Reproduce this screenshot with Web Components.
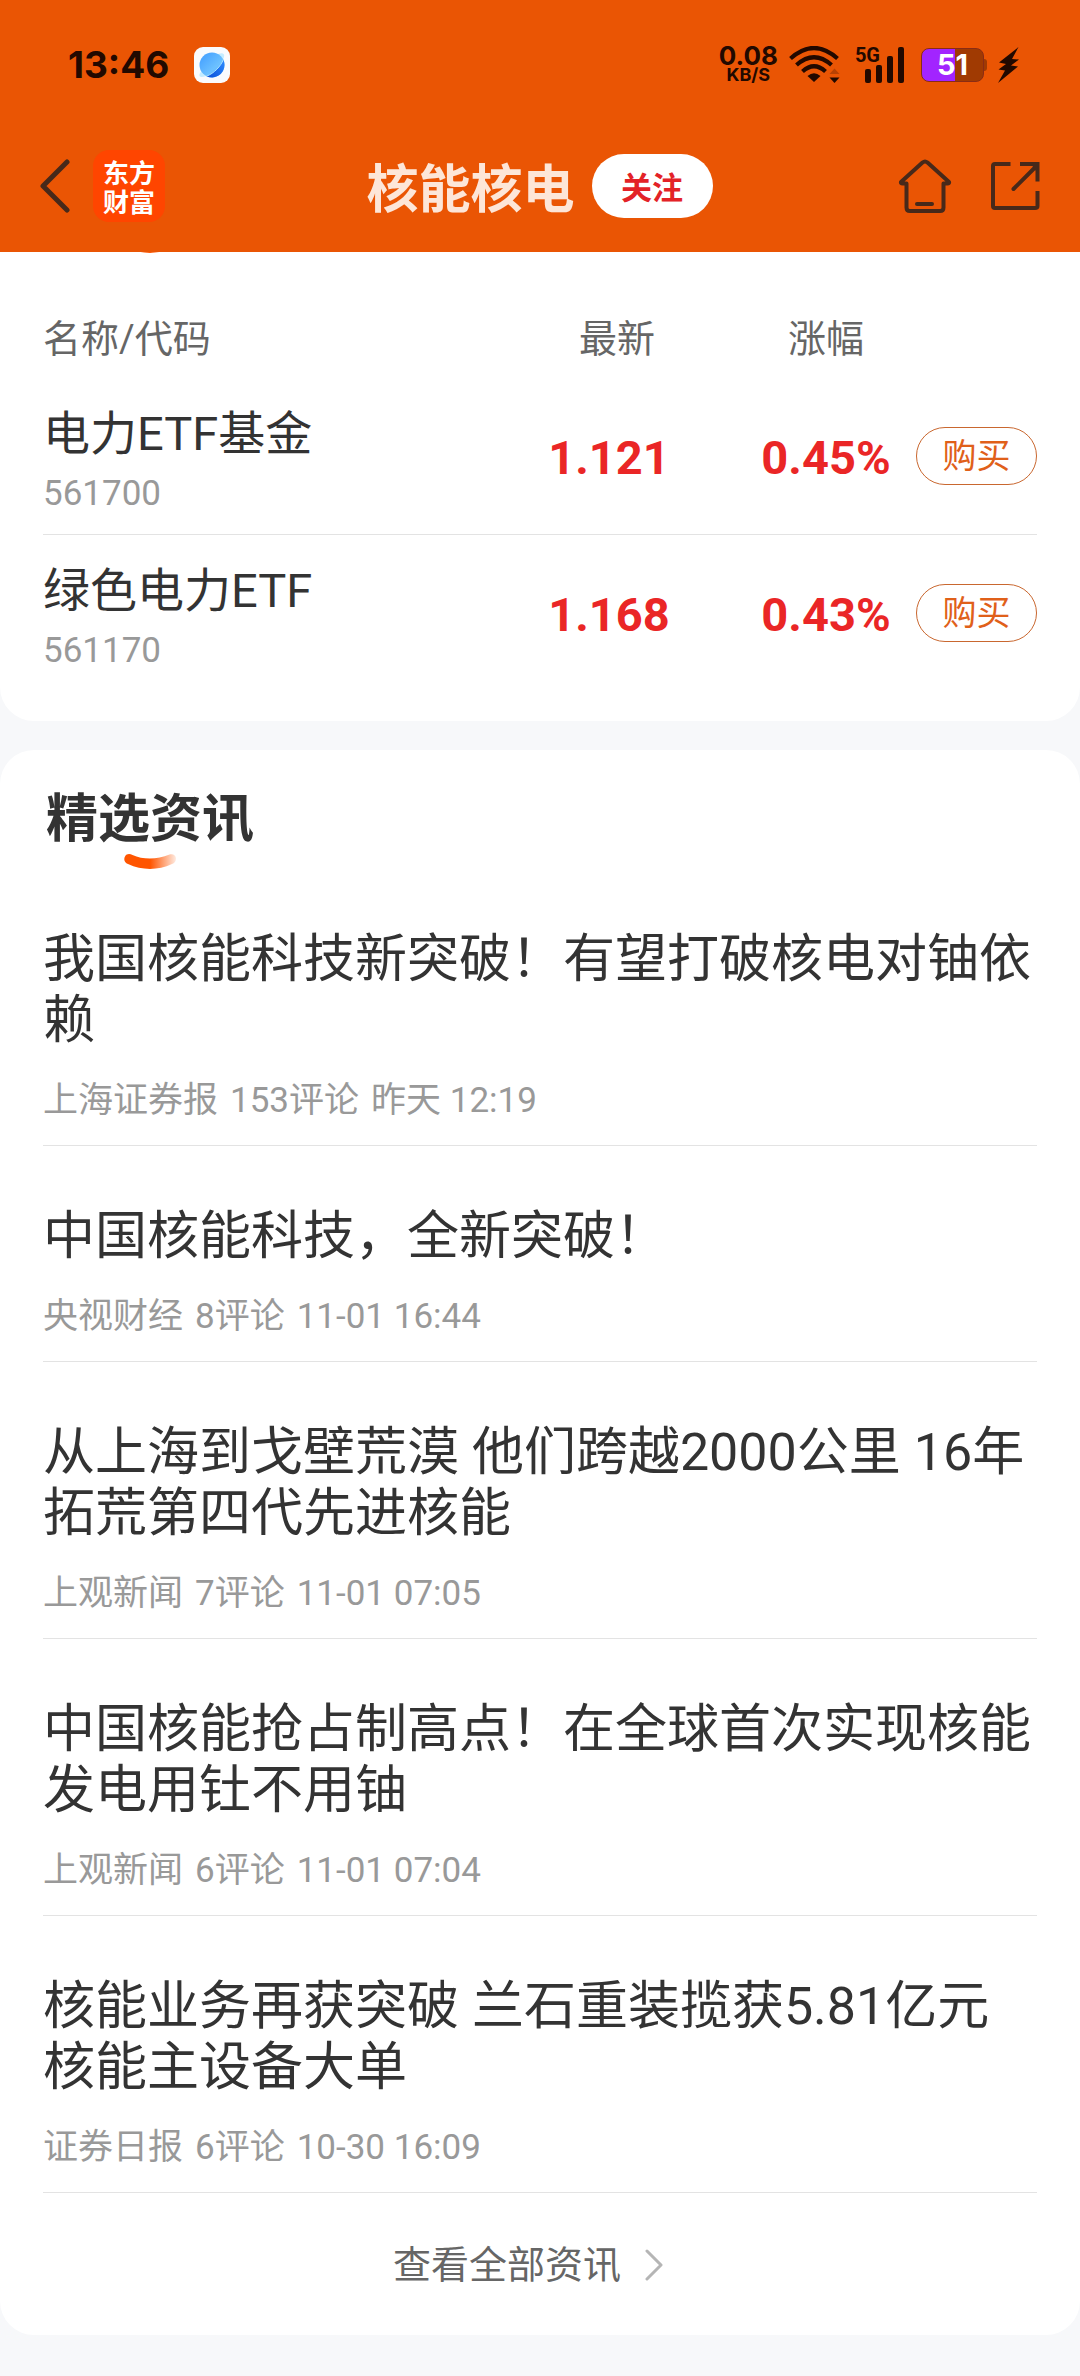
<!DOCTYPE html>
<html lang="zh-CN">
<head>
<meta charset="utf-8">
<meta name="viewport" content="width=device-width, initial-scale=1">
<title>核能核电</title>
<style>
  :root {
    --brand: #ea5504;
    --ink: #333;
    --muted: #666;
    --faint: #999;
    --line: #e3e3e3;
    --rise: #ea2626;
    --side: 43px;
  }
  body {
    margin: 0;
    background: #f7f8fa;
    color: var(--ink);
    font-family: Roboto, "Noto Sans CJK SC", sans-serif;
  }
</style>
</head>
<body>
<app-header>
  <status-bar></status-bar>
  <nav-bar>核能核电</nav-bar>
</app-header>
<main>
  <page-card flush>
    <fund-table></fund-table>
  </page-card>
  <page-card>
    <section-title>精选资讯</section-title>
    <news-item href="#n1">我国核能科技新突破！有望打破核电对铀依赖<span slot="source">上海证券报</span><span slot="comments">153评论</span><time slot="time">昨天 12:19</time></news-item>
    <news-item href="#n2">中国核能科技，全新突破！<span slot="source">央视财经</span><span slot="comments">8评论</span><time slot="time">11-01 16:44</time></news-item>
    <news-item href="#n3">从上海到戈壁荒漠 他们跨越2000公里 16年拓荒第四代先进核能<span slot="source">上观新闻</span><span slot="comments">7评论</span><time slot="time">11-01 07:05</time></news-item>
    <news-item href="#n4">中国核能抢占制高点！在全球首次实现核能发电用钍不用铀<span slot="source">上观新闻</span><span slot="comments">6评论</span><time slot="time">11-01 07:04</time></news-item>
    <news-item href="#n5">核能业务再获突破 兰石重装揽获5.81亿元核能主设备大单<span slot="source">证券日报</span><span slot="comments">6评论</span><time slot="time">10-30 16:09</time></news-item>
    <more-link href="#all">查看全部资讯</more-link>
  </page-card>
</main>

<script>
const define = (name, html, setup) => {
  const template = document.createElement('template');
  template.innerHTML = html;
  customElements.define(name, class extends HTMLElement {
    constructor() {
      super();
      this.attachShadow({ mode: 'open' }).append(template.content.cloneNode(true));
    }
    connectedCallback() {
      if (setup) setup(this, this.shadowRoot);
    }
  });
};

/* Short curved stroke that fades out to the right, used below section titles */
define('smile-mark', `
  <style>
    :host { display: block; width: 52px; height: 15px; }
    svg { display: block; width: 100%; height: 100%; }
  </style>
  <svg viewBox="0 0 52 15" aria-hidden="true">
    <defs><linearGradient id="g" x1="0" x2="1" y1="0" y2="0">
      <stop offset=".5" stop-color="#ff5500"/><stop offset="1" stop-color="#ff5500" stop-opacity=".12"/>
    </linearGradient></defs>
    <path d="M1 2.5C2.500 -.3 5.500 -.6 8.500 1C19 5.800 33 5.800 45.500 .6C49 -.6 52 1.500 52 4.500C52 7.500 50.500 9 48 10C34 16.500 18 16.500 4 10C.5 8.300 -.6 5.500 1 2.500Z" fill="url(#g)"/>
  </svg>`);

define('app-header', `
  <style>
    :host { display: block; position: relative; z-index: 1; background: var(--brand); }
  </style>
  <slot></slot>`);

define('status-bar', `
  <style>
    :host {
      display: flex; align-items: center; justify-content: space-between;
      box-sizing: border-box; height: 120px; padding: 9px 60px 0 68px;
      color: #220900; font-family: Inter, sans-serif; font-weight: 700;
    }
    div { display: flex; align-items: center; }
    svg { display: block; }
    .left { gap: 25px; }
    .time { font-size: 37px; line-height: 48px; }
    .rate { flex-direction: column; font-size: 26px; line-height: 20px; }
    .rate small { font-size: 18px; line-height: 17px; }
    .wifi { margin-left: 11px; }
    .signal { align-items: flex-start; margin-left: 14px; }
    .signal span { font: 700 20px/18px Roboto, sans-serif; }
    .signal svg { margin-left: -15px; }
    .battery {
      justify-content: center; box-sizing: border-box; width: 63px; height: 34px; margin-left: 17px;
      position: relative; border: 1px solid #8a2c14; border-radius: 8px;
      background: linear-gradient(90deg, #a224ff 54%, #a03a02 54%);
      color: #fff; font-size: 29px; line-height: 32px;
    }
    .battery::after {
      content: ""; position: absolute; right: -4px; top: 10px; width: 3px; height: 12px;
      background: #a03a02; border-radius: 0 3px 3px 0;
    }
    .bolt { margin-left: 14px; }
  </style>
  <div class="left">
    <span class="time">13:46</span>
    <svg width="36" height="36" viewBox="0 0 36 36" aria-hidden="true">
      <defs>
        <linearGradient id="a" x1="0" y1="0" x2="1" y2="1"><stop stop-color="#3f9bff"/><stop offset=".6" stop-color="#6bc0ff"/></linearGradient>
        <linearGradient id="b" x1="0" y1="1" x2="1" y2="0"><stop stop-color="#0a4fd8"/><stop offset="1" stop-color="#2f8cff"/></linearGradient>
      </defs>
      <rect width="36" height="36" rx="9" fill="#fafbfd"/>
      <path d="M6 26C4 30 7 31 12 29C20 26 28 17 30 10C31 6 28 5.500 24 7Z" fill="#c4ecff"/>
      <circle cx="18" cy="18" r="12.500" fill="url(#a)"/>
      <path d="M30.500 18A12.500 12.500 0 0 1 12.500 29.200C20 26.500 27 19 29.300 12.600Q30.500 15 30.500 18Z" fill="url(#b)"/>
      <path d="M12.500 29.200C20 26.500 27 19 29.300 12.600" fill="none" stroke="#a8e2ff"/>
    </svg>
  </div>
  <div>
    <div class="rate"><span>0.08</span><small>KB/S</small></div>
    <svg class="wifi" width="52" height="37" viewBox="0 0 52 37" aria-hidden="true">
      <g fill="none" stroke="currentColor" stroke-width="4.200">
        <path d="M1.500 12.500Q25 -8.500 48.500 12.500"/>
        <path d="M7.500 19Q25 3.500 42.500 19"/>
        <path d="M13.500 25.500Q25 15 36.500 25.500"/>
      </g>
      <path d="M25 36L18.500 30Q25 24.500 31.500 30Z" fill="currentColor"/>
      <path d="M45.500 22.500L50.500 28H40.500Z" fill="#b84103"/>
      <path d="M45.500 37L50.500 31.500H40.500Z" fill="currentColor"/>
    </svg>
    <div class="signal">
      <span>5G</span>
      <svg width="39" height="37" viewBox="0 0 39 37" fill="currentColor" aria-hidden="true">
        <rect y="23" width="6" height="14" rx="2"/><rect x="11" y="19" width="6" height="18" rx="2"/>
        <rect x="22" y="10" width="6" height="27" rx="2"/><rect x="33" y="1" width="6" height="36" rx="2"/>
      </svg>
    </div>
    <div class="battery">51</div>
    <svg class="bolt" width="22" height="36" viewBox="0 0 22 36" fill="currentColor" aria-hidden="true">
      <path d="M20.500 0L1 15.500L8 17L0.500 22.500L7 23.500L0 36L20 19.500L13 18.500L21 12.500L14 12Z"/>
    </svg>
  </div>`);

define('brand-logo', `
  <style>
    :host {
      display: flex; flex-direction: column; justify-content: center; align-items: center;
      width: 72px; height: 72px; border-radius: 16px; background: #ff4500; color: #fff;
      font: 700 26px/29px "Noto Sans CJK SC", sans-serif;
    }
  </style>
  <span>东方</span><span>财富</span>`);

define('nav-bar', `
  <style>
    :host {
      display: grid; grid-template-columns: 1fr auto 1fr; align-items: center;
      box-sizing: border-box; height: 132px; padding: 0 40px 0 39px;
    }
    a, button { display: block; border: 0; padding: 0; background: none; color: #47291a; }
    svg { display: block; fill: none; stroke: currentColor; stroke-width: 4; }
    .left, .mid, .right { display: flex; align-items: center; }
    .left { gap: 23px; }
    .right { justify-content: flex-end; gap: 38px; }
    .mid { gap: 17px; }
    h1 { margin: 0; font: 700 52px/64px "Noto Sans CJK SC", sans-serif; color: #fde6d8; }
    .follow {
      width: 121px; height: 64px; border-radius: 32px; background: #fff; color: #e32227;
      font: 700 31px/64px "Noto Sans CJK SC", sans-serif; text-align: center;
    }
  </style>
  <div class="left">
    <a href="#back" aria-label="返回"><svg width="31" height="54" viewBox="0 0 31 54"><path d="M28 3L4 27L28 51" stroke-width="5" stroke-linecap="round" stroke-linejoin="round"/></svg></a>
    <brand-logo></brand-logo>
  </div>
  <div class="mid"><h1><slot></slot></h1><button class="follow" type="button">关注</button></div>
  <div class="right">
    <a href="#home" aria-label="首页"><svg width="54" height="54" viewBox="0 0 54 54" stroke-linejoin="round" stroke-linecap="round">
      <path d="M24.500 3.500Q27 1.500 29.500 3.500L51 23Q51.500 24.500 49.500 24.500H45.500V48.500Q45.500 52 42 52H12Q8.500 52 8.500 48.500V24.500H4.500Q2.500 24.500 3 23Z"/><path d="M19 45H34"/></svg></a>
    <button type="button" aria-label="分享"><svg width="50" height="50" viewBox="0 0 50 50">
      <path d="M20.500 3H5Q3 3 3 5V45Q3 47 5 47H45Q47.500 47 47.500 45V30"/><path d="M30 3H47.500V20.500"/><path d="M23.500 28L45 6.500" stroke-linecap="round"/><path d="M41 3H47.500V12Z" fill="currentColor" stroke="none"/></svg></button>
  </div>`);

define('page-card', `
  <style>
    :host { display: block; box-sizing: border-box; margin-bottom: 29px; padding: 0 var(--side); border-radius: 34px; background: #fff; }
    :host([flush]) { border-radius: 0 0 34px 34px; }
  </style>
  <slot></slot>`);

define('fund-table', `
  <style>
    :host { display: block; position: relative; padding: 66px 0 29px; }
    smile-mark { position: absolute; left: 81px; top: -14px; }
    table { width: 100%; table-layout: fixed; border-collapse: separate; border-spacing: 0; }
    .price { width: 266px; } .change { width: 168px; } .action { width: 127px; }
    th, td { padding: 0; text-align: center; font-weight: 400; }
    thead th { box-sizing: border-box; padding-bottom: 18px; color: var(--muted); font-size: 38px; line-height: 42px; }
    thead th.price { padding-left: 16px; }
    th:first-child { text-align: left; }
    tbody th, tbody td { box-sizing: border-box; height: 157px; border-bottom: 1px solid var(--line); }
    tbody tr:last-child > * { border-bottom-color: transparent; }
    .fund { display: flex; flex-direction: column; gap: 11px; padding-top: 9px; }
    .name { font-size: 47px; line-height: 56px; }
    .code { color: var(--faint); font-size: 35px; line-height: 42px; }
    tbody td.num { padding-top: 4px; color: var(--rise); font-size: 47px; line-height: 56px; font-weight: 700; }
    td:last-child { text-align: right; }
    button {
      width: 121px; height: 58px; padding: 0; border: 1px solid #c9672f; border-radius: 29px;
      background: #fff; color: #e0601a; font: 400 34px/56px Roboto, "Noto Sans CJK SC", sans-serif; vertical-align: middle;
    }
  </style>
  <smile-mark></smile-mark>
  <table>
    <thead><tr><th scope="col">名称/代码</th><th scope="col" class="price">最新</th><th scope="col" class="change">涨幅</th><th class="action"></th></tr></thead>
    <tbody></tbody>
  </table>`, (host, root) => {
  const funds = [
    { name: '电力ETF基金', code: '561700', price: '1.121', change: '0.45%' },
    { name: '绿色电力ETF', code: '561170', price: '1.168', change: '0.43%' }
  ];
  root.querySelector('tbody').innerHTML = funds.map(f => `
    <tr>
      <th scope="row"><span class="fund"><span class="name">${f.name}</span><span class="code">${f.code}</span></span></th>
      <td class="num">${f.price}</td><td class="num">${f.change}</td>
      <td><button type="button">购买</button></td>
    </tr>`).join('');
});

define('section-title', `
  <style>
    :host { display: block; padding: 39px 0 0 3px; }
    h2 { margin: 0 0 4px; font-size: 52px; line-height: 61px; font-weight: 700; }
    smile-mark { margin-left: 78px; }
  </style>
  <h2><slot></slot></h2>
  <smile-mark></smile-mark>`);

define('news-item', `
  <style>
    :host { display: block; border-bottom: 1px solid var(--line); }
    a { display: block; padding: 60px 0 23px; color: inherit; text-decoration: none; }
    h3 { margin: 0 0 29px; font-size: 52px; line-height: 61px; font-weight: 400; }
    p { display: flex; gap: 12px; margin: 0; color: var(--faint); font-size: 35px; line-height: 42px; }
  </style>
  <a><h3><slot></slot></h3><p><slot name="source"></slot><slot name="comments"></slot><slot name="time"></slot></p></a>`,
  (host, root) => { root.querySelector('a').href = host.getAttribute('href'); });

define('more-link', `
  <style>
    :host { display: block; }
    a {
      display: flex; align-items: center; justify-content: center; gap: 24px;
      padding: 50px 24px 48px 0; color: var(--muted); font-size: 38px; line-height: 44px; text-decoration: none;
    }
    svg { display: block; }
  </style>
  <a><slot></slot><svg width="18" height="32" viewBox="0 0 18 32" fill="none" stroke="#b5b5b5" stroke-width="3" stroke-linecap="round" stroke-linejoin="round" aria-hidden="true"><path d="M2 2L16 16L2 30"/></svg></a>`,
  (host, root) => { root.querySelector('a').href = host.getAttribute('href'); });
</script>
</body>
</html>
